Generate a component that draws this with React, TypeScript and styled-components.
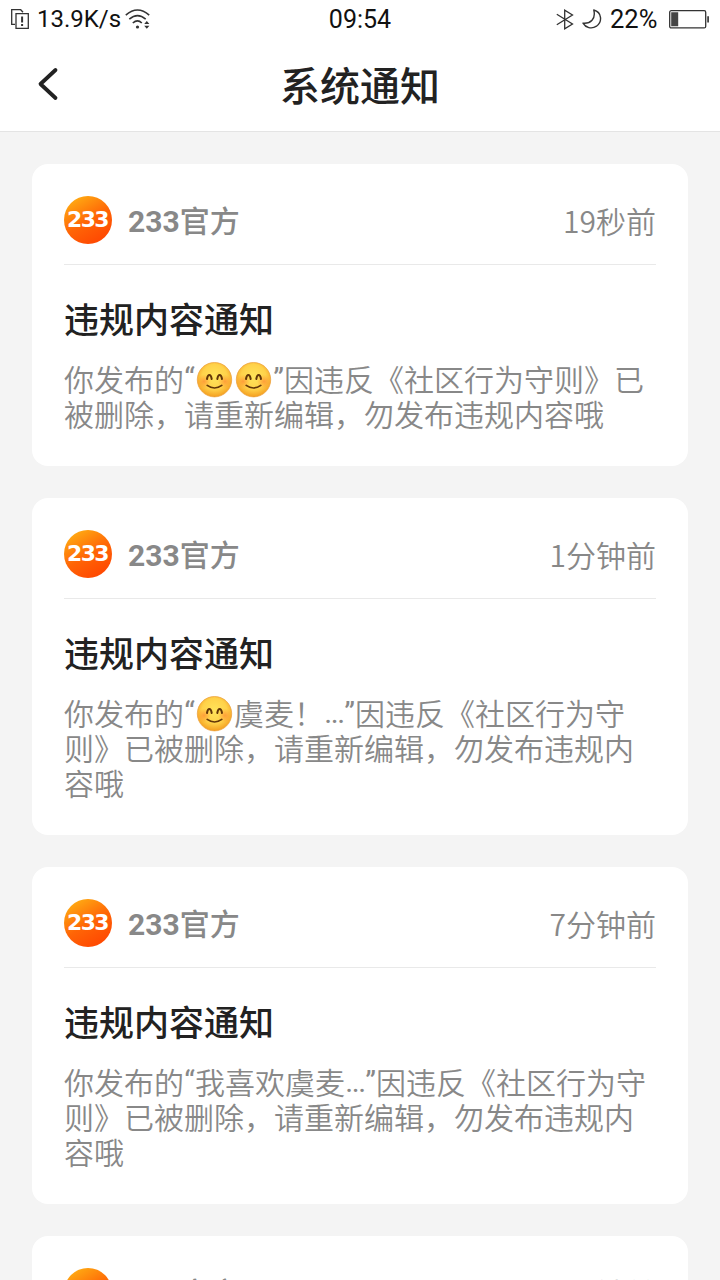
import React, { useId } from "react";
import styled, { createGlobalStyle } from "styled-components";

const GlobalStyle = createGlobalStyle`
  * { box-sizing: border-box; }
  html, body { margin: 0; height: 100%; overflow: hidden; background: #f4f4f4; }
  body { font-family: Roboto, "Noto Sans CJK SC", sans-serif; }
`;

const Screen = styled.div`
  width: 720px;
  height: 1280px;
  overflow: hidden;
  background: #f4f4f4;
`;

const StatusBar = styled.div`
  display: grid;
  grid-template-columns: 1fr auto 1fr;
  align-items: center;
  height: 38px;
  padding: 0 11px;
  background: #fff;
  color: #111;
  font: 400 25px/38px Roboto, sans-serif;
`;

const Clock = styled.span`
  padding-top: 2px;
  line-height: 36px;
`;

const StatusGroup = styled.div<{ $end?: boolean }>`
  display: flex;
  align-items: center;
  gap: 8px;
  margin-right: ${(p) => (p.$end ? "-1px" : "0")};
  justify-content: ${(p) => (p.$end ? "flex-end" : "flex-start")};
  & > svg { flex: none; }
`;

const StatusText = styled.span<{ $width: number; $size?: number }>`
  flex: none;
  width: ${(p) => p.$width}px;
  font-size: ${(p) => p.$size ?? 25}px;
  white-space: nowrap;
`;

const NavBar = styled.header`
  display: grid;
  grid-template-columns: 60px 1fr 60px;
  align-items: center;
  height: 94px;
  padding: 0 30px;
  background: #fff;
  border-bottom: 1px solid #e4e4e4;
`;

const BackButton = styled.button`
  display: flex;
  padding: 0 0 1px;
  border: 0;
  background: none;
`;

const PageTitle = styled.h1`
  margin: 0 0 2px;
  text-align: center;
  color: #222;
  font: 500 40px/60px "Noto Sans CJK SC", sans-serif;
`;

const List = styled.main`
  display: flex;
  flex-direction: column;
  gap: 32px;
  padding: 32px;
`;

const Card = styled.article`
  padding: 32px 32px 35px;
  border-radius: 16px;
  background: #fff;
`;

const CardHeader = styled.div`
  display: flex;
  align-items: center;
  height: 69px;
  padding-bottom: 20px;
  border-bottom: 1px solid #e9e9e9;
`;

const Sender = styled.span`
  flex: 1;
  margin: 3px 0 0 16px;
  color: #888;
  font: 700 30px/48px Roboto, "Noto Sans CJK SC", sans-serif;
  & > span { font-weight: 500; }
`;

const Time = styled.time`
  color: #888;
  font: 350 30px/48px "Noto Sans CJK SC", sans-serif;
`;

const CardTitle = styled.h2`
  margin: 27px 0 17px;
  color: #222;
  font: 500 35px/52px "Noto Sans CJK SC", sans-serif;
`;

const Message = styled.p`
  margin: 0;
  color: #888;
  font: 350 30px/35px "Noto Sans CJK SC", sans-serif;
`;

const Punct = styled.span<{ $width: number; $tight?: boolean }>`
  display: inline-block;
  width: ${(p) => p.$width}px;
  height: 35px;
  vertical-align: top;
  text-align: center;
  font-family: Roboto, sans-serif;
  font-weight: 400;
  letter-spacing: ${(p) => (p.$tight ? "-1.4px" : "0")};
  white-space: nowrap;
`;

const EmojiSvg = styled.svg`
  display: inline-block;
  width: 39px;
  height: 35px;
  overflow: visible;
  vertical-align: top;
`;

function Emoji() {
  const id = useId();
  return (
    <EmojiSvg viewBox="0 -2 39 35" role="img" aria-label="😊">
      <defs>
        <radialGradient id={id} cx=".5" cy=".42" r=".6">
          <stop offset="0" stopColor="#ffe45a" />
          <stop offset=".6" stopColor="#ffd24a" />
          <stop offset="1" stopColor="#f39a1c" />
        </radialGradient>
        <radialGradient id={id + "c"}>
          <stop offset="0" stopColor="#ff7a2c" stopOpacity=".6" />
          <stop offset="1" stopColor="#ff8a2c" stopOpacity="0" />
        </radialGradient>
      </defs>
      <circle cx="19.5" cy="16.7" r="17.2" fill={`url(#${id})`} stroke="#eb9d38" strokeWidth=".7" />
      <circle cx="9" cy="18.5" r="7" fill={`url(#${id}c)`} />
      <circle cx="30" cy="18.5" r="7" fill={`url(#${id}c)`} />
      <g fill="none" stroke="#633608" strokeWidth="2" strokeLinecap="round">
        <path d="M12 16C12.8 10.8 15.9 10.8 16.7 16" />
        <path d="M22.3 16C23.1 10.8 26.2 10.8 27 16" />
        <path d="M12.2 22.4Q19.5 27.6 26.8 22.4" strokeWidth="1.7" />
      </g>
    </EmojiSvg>
  );
}

function Avatar() {
  const id = useId();
  return (
    <svg width="48" height="48" viewBox="0 0 48 48">
      <defs>
        <linearGradient id={id} x1=".15" y1=".1" x2=".65" y2=".95">
          <stop offset="0" stopColor="#ffa812" />
          <stop offset=".55" stopColor="#ff6506" />
          <stop offset="1" stopColor="#ff4b02" />
        </linearGradient>
      </defs>
      <circle cx="24" cy="24" r="24" fill={`url(#${id})`} />
      <text
        x="3" y="31.4" textLength="41" lengthAdjust="spacingAndGlyphs" letterSpacing="-1.5"
        fill="#fff" fontFamily="DejaVu Sans, sans-serif" fontWeight="700" fontSize="21"
      >
        233
      </text>
    </svg>
  );
}

const SimIcon = () => (
  <svg width="18" height="20" viewBox="0 0 18 20" fill="none" stroke="#333" strokeWidth="1.3">
    <path d="M4 15.3H.7V.7h9l2.3 2.6M5 4.7h12.3v14.6H5z" />
    <path d="M11.1 7.5v6M11.1 15v2" strokeWidth="2" />
  </svg>
);

const WifiIcon = () => (
  <svg width="26" height="20" viewBox="0 0 26 20" fill="none" stroke="#333" strokeWidth="1.6">
    <path d="M.8 6.2Q12.5-4.2 24.2 6.2M4.3 10.2q8.2-7.2 16.4 0M7.8 14q4.8-4.2 9 0" />
    <circle cx="12.5" cy="18" r="1.6" fill="#333" stroke="none" />
    <path d="M19.2 15l2.6-3 2.6 3zM19.2 16.8l2.6 3 2.6-3z" fill="#333" stroke="none" />
  </svg>
);

const BluetoothIcon = () => (
  <svg width="18" height="21" viewBox="0 0 18 21" fill="none" stroke="#333" strokeWidth="1.3">
    <path d="M.8 5.2L16.5 15 8.7 19.8V1.2L16.5 6 .8 15.8" />
  </svg>
);

const MoonIcon = () => (
  <svg width="20" height="20" viewBox="0 0 20 20" fill="none" stroke="#333" strokeWidth="1.4" strokeLinejoin="round">
    <path d="M11.8 1C20 3.2 20.5 13 14.5 17.2 9.5 20.5 3.5 18.6 1 14.1 8.5 14.8 14 10 11.8 1z" />
  </svg>
);

const BatteryIcon = () => (
  <svg width="41" height="19" viewBox="0 0 41 19">
    <rect x=".7" y=".7" width="36" height="17.2" rx="1.5" fill="none" stroke="#333" strokeWidth="1.3" />
    <path d="M2.2 2.3h7v14h-7zM38.2 6.3H40v6.2h-1.8z" fill="#444" />
  </svg>
);

type Notice = { time: string; quote: React.ReactNode };

const Dots = () => <Punct $width={20} $tight>...</Punct>;

const notices: Notice[] = [
  { time: "19秒前", quote: <><Emoji /><Emoji /></> },
  { time: "1分钟前", quote: <><Emoji />虞麦！<Dots /></> },
  { time: "7分钟前", quote: <>我喜欢虞麦<Dots /></> },
  { time: "8分钟前", quote: <>我喜欢虞麦<Dots /></> },
];

function NoticeCard({ time, quote }: Notice) {
  return (
    <Card>
      <CardHeader>
        <Avatar />
        <Sender>233<span>官方</span></Sender>
        <Time>{time}</Time>
      </CardHeader>
      <CardTitle>违规内容通知</CardTitle>
      <Message>
        你发布的<Punct $width={11}>“</Punct>{quote}<Punct $width={11}>”</Punct>
        因违反《社区行为守则》已被删除，请重新编辑，勿发布违规内容哦
      </Message>
    </Card>
  );
}

export default function App() {
  return (
    <Screen>
      <GlobalStyle />
      <StatusBar>
        <StatusGroup>
          <SimIcon />
          <StatusText $width={80} $size={24}>13.9K/s</StatusText>
          <WifiIcon />
        </StatusGroup>
        <Clock>09:54</Clock>
        <StatusGroup $end>
          <BluetoothIcon />
          <MoonIcon />
          <StatusText $width={51} $size={25.5}>22%</StatusText>
          <BatteryIcon />
        </StatusGroup>
      </StatusBar>
      <NavBar>
        <BackButton aria-label="返回">
          <svg width="36" height="36" viewBox="0 0 36 36" fill="none" stroke="#222" strokeWidth="3.8" strokeLinecap="round" strokeLinejoin="round">
            <path d="M25.5 4L10.5 18l15 14" />
          </svg>
        </BackButton>
        <PageTitle>系统通知</PageTitle>
      </NavBar>
      <List>
        {notices.map((n) => <NoticeCard key={n.time} {...n} />)}
      </List>
    </Screen>
  );
}
